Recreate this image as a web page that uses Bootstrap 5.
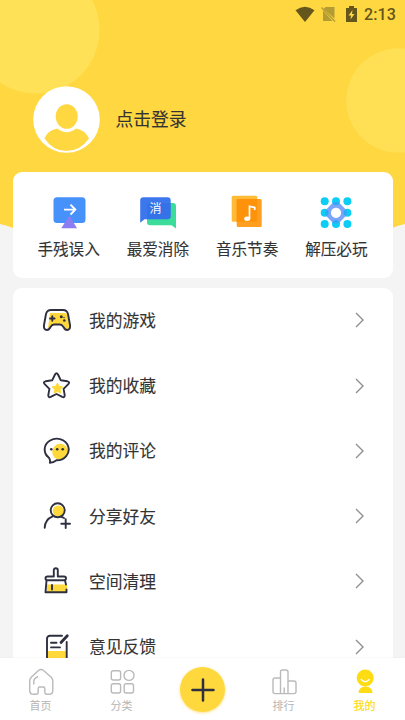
<!DOCTYPE html>
<html lang="zh-CN">
<head>
<meta charset="utf-8">
<meta name="viewport" content="width=device-width, initial-scale=1">
<title>我的</title>
<link href="https://cdn.jsdelivr.net/npm/bootstrap@5.3.0/dist/css/bootstrap.min.css" rel="stylesheet">
<style>
body{background:#f4f4f4;color:#333;font-family:"Noto Sans CJK SC",sans-serif;line-height:1}
.screen{height:720px;overflow:hidden}
.backdrop{top:0;left:0;z-index:0}
.statusbar{height:28px;padding:1px 9px 0 0;color:#65561c;font:500 16px/1 Roboto,sans-serif;letter-spacing:.1px}
.profile{height:144px;padding:13.5px 0 0 32.5px}
.login-text{font-size:17.8px;-webkit-text-stroke:.1px #333}
.profile-row{height:67px;margin-top:44px;gap:16px}
.panel{background:#fff;border-radius:9px;margin:0 12.5px}
.shortcuts{height:106px;padding:22px 11.5px 0}
.shortcut-name{font-size:15.6px;margin-top:11px;-webkit-text-stroke:.1px #333;white-space:nowrap}
.menu-list{height:400px;margin-top:9.6px;overflow:hidden}
.menu-line{height:65.3px;flex:none;padding:0 26.5px 0 30.5px;font-size:16.8px;-webkit-text-stroke:.1px #333}
.menu-line svg:first-child{margin-right:18px}
.tabs{height:62px;bottom:0;z-index:3;background:#fff;box-shadow:0 -1px 2px rgba(0,0,0,.025)}
.tab-item{color:#b5b5b5;font-size:11px;padding-top:10px;gap:4px}
.tab-item.on{color:#fddc14;-webkit-text-stroke:.2px #fddc14}
.add-btn{width:45px;height:45px;margin-top:9px;background:#ffd83d;box-shadow:0 1px 3px rgba(255,200,40,.55)}
.ink{fill:none;stroke:#2e3040;stroke-width:1.9;stroke-linecap:round;stroke-linejoin:round}
.soft{fill:none;stroke:#bababa;stroke-width:1.4;stroke-linecap:round;stroke-linejoin:round}
.sun{fill:#ffd93b}
</style>
</head>
<body>
<main class="screen position-relative">
<svg class="backdrop position-absolute" width="405" height="240" viewBox="0 0 405 240">
<path d="M0 0H405V224Q398 225.500 392 228V230H13V228Q7 225.500 0 224Z" fill="#ffd740"/>
<circle cx="36" cy="30" r="63.500" fill="#ffe158"/>
<circle cx="398.500" cy="100.500" r="52.300" fill="#ffe158" opacity=".85"/>
</svg>
<div class="position-relative">
<header class="statusbar d-flex justify-content-end align-items-center">
<svg width="69" height="20" viewBox="0 0 69 20">
<path d="M.500 5.300Q10 -1.700 19.500 5.300L10 17Z" fill="#65561c"/>
<path d="M30.500 2H39.500V13.500L28.500 4Z M28 5.500L37.500 16H28Z" fill="#b49c35"/><path d="M26.500 2.500L40 16.500" stroke="#b49c35" stroke-width="1.400"/>
<path d="M51 3H54V1H59V3H62V17H51Z" fill="#65561c"/><path d="M57.500 5L53.500 10.500H56L55.500 14.500L59.500 9H57Z" fill="#ffd740"/>
</svg>
<span>2:13</span>
</header>
<section class="profile">
<div class="d-flex align-items-center profile-row">
<svg width="67" height="67" viewBox="0 0 67 67"><circle cx="33.500" cy="33.500" r="33.300" fill="#fff"/><ellipse cx="33.700" cy="30.500" rx="11" ry="12.300" fill="#ffd740"/><path d="M11.500 52.500Q15 44 24.500 42.500Q33.700 50 43 42.500Q52 44 56 52.500Q47 65 33.500 65Q20 65 11.500 52.500Z" fill="#ffd740"/></svg>
<span class="login-text">点击登录</span>
</div>
</section>
<section class="panel shortcuts">
<div class="row g-0 row-cols-4 text-center">
<div class="col d-flex flex-column align-items-center">
<svg width="36" height="36" viewBox="0 0 36 36"><rect x="2.500" y="3.300" width="32" height="25.800" rx="3.500" fill="#4791fa"/><path d="M18.300 21.500L26 34.200H10.300Z" fill="#8d7df2"/><path d="M13 15.600H24M19.500 10.700L24.300 15.600L19.500 20.500" fill="none" stroke="#fff" stroke-width="1.900"/></svg>
<span class="shortcut-name">手残误入</span></div>
<div class="col d-flex flex-column align-items-center">
<svg width="36" height="36" viewBox="0 0 36 36"><path d="M10 9H33Q36 9 36 12V34.500L31.500 31.300H10Q7 31.300 7 28V12Q7 9 10 9Z" fill="#3cdc9b"/><path d="M3.500 3.300H27.500Q30.700 3.300 30.700 6.500V22Q30.700 25.300 27.500 25.300H4.500L.200 28.700V6.500Q.200 3.300 3.500 3.300Z" fill="#3c77ee"/><path d="M7 12Q7 9 10 9H30.700V22Q30.700 25.300 27.500 25.300H7Z" fill="#2967db" opacity=".35"/><text x="15.500" y="18.600" text-anchor="middle" font-size="12" fill="#fff">消</text></svg>
<span class="shortcut-name">最爱消除</span></div>
<div class="col d-flex flex-column align-items-center">
<svg width="36" height="36" viewBox="0 0 36 36"><rect x="2.700" y="1.800" width="25.500" height="26" rx="1.500" fill="#ffba36"/><rect x="7.700" y="5" width="25" height="28" rx="1.500" fill="#ff9f22"/><path d="M7.700 5H28.200V27.800H7.700Z" fill="#ff920b"/><ellipse cx="18.200" cy="24.800" rx="3" ry="2.200" fill="#fff"/><path d="M20.500 25V12.300L25.700 13.500V16" fill="none" stroke="#fff" stroke-width="1.700"/></svg>
<span class="shortcut-name">音乐节奏</span></div>
<div class="col d-flex flex-column align-items-center">
<svg width="36" height="36" viewBox="0 0 36 36"><g fill="#0dcdf5"><circle cx="6.700" cy="7.200" r="4"/><circle cx="18" cy="7.200" r="4"/><circle cx="29.400" cy="7.200" r="4"/><circle cx="6.700" cy="18.800" r="4"/><circle cx="18" cy="18.800" r="4"/><circle cx="29.400" cy="18.800" r="4"/><circle cx="6.700" cy="30" r="4"/><circle cx="18" cy="30" r="4"/><circle cx="29.400" cy="30" r="4"/></g><path d="M14.500 9Q18 7 21.500 9L27.800 15.500Q29.800 18.800 27.800 22.100L21.500 28.500Q18 30.500 14.500 28.500L8.200 22.100Q6.200 18.800 8.200 15.500Z" fill="#7aa5fb"/><g fill="#24acf5"><path d="M14.500 9Q18 7 21.500 9Q20.600 11.200 18 11.200Q15.400 11.200 14.500 9ZM14.500 28.500Q18 30.500 21.500 28.500Q20.600 26 18 26Q15.400 26 14.500 28.500ZM8.200 15.500Q6.200 18.800 8.200 22.100Q10.700 21 10.700 18.800Q10.700 16.600 8.200 15.500ZM27.800 15.500Q29.800 18.800 27.800 22.100Q25.400 21 25.400 18.800Q25.400 16.600 27.800 15.500Z"/></g><circle cx="18" cy="18.800" r="5.100" fill="#fff"/></svg>
<span class="shortcut-name">解压必玩</span></div>
</div>
</section>
<section class="panel menu-list d-flex flex-column">
<div class="menu-line d-flex align-items-center">
<svg width="28" height="28" viewBox="0 0 28 28"><path class="sun" d="M7 7H22Q24 7 25 11L27 22L24 24L19 18H10L5 22Z"/><path class="ink" d="M8 4H20Q24 4 25 8L27 19Q27.500 24 24 24Q22 24 20.500 21Q19 18.500 17 18.500H11Q9 18.500 7.500 21Q6 24 4 24Q.500 24 1 19L3 8Q4 4 8 4Z"/><path class="ink" d="M7 12.500H11.600M9.300 10.200V14.800"/><g fill="#2e3040"><circle cx="18.300" cy="10.800" r="1.500"/><circle cx="21.300" cy="14.500" r="1.300"/><circle cx="21" cy="11.500" r=".7"/></g></svg>
<span>我的游戏</span><svg class="ms-auto" width="12" height="18" viewBox="0 0 12 18"><path d="M2 2L9 9L2 16" fill="none" stroke="#8f8f8f" stroke-width="1.400"/></svg></div>
<div class="menu-line d-flex align-items-center">
<svg width="28" height="28" viewBox="0 0 28 28"><path class="ink" d="M12 2.500Q13.500 0 15 2.500L17.800 8.300L24.500 9.300Q27.200 10 25.300 12.100L20.600 16.800L21.700 23.200Q21.700 26 19.300 24.900L13.500 22L7.700 24.900Q5.300 26 5.300 23.200L6.400 16.800L1.700 12.100Q-.200 10 2.500 9.300L9.200 8.300Z"/><path class="sun" stroke="#ffd93b" stroke-linejoin="round" d="M14.400 11L16 14.300L19.700 14.900L17 17.500L17.700 21.100L14.400 19.400L11.100 21.100L11.800 17.500L9.100 14.900L12.800 14.300Z"/></svg>
<span>我的收藏</span><svg class="ms-auto" width="12" height="18" viewBox="0 0 12 18"><path d="M2 2L9 9L2 16" fill="none" stroke="#8f8f8f" stroke-width="1.400"/></svg></div>
<div class="menu-line d-flex align-items-center">
<svg width="28" height="28" viewBox="0 0 28 28"><circle class="sun" cx="17.200" cy="14.800" r="8"/><path class="ink" d="M6 20.800A12 10.800 0 1 1 13.500 23.300Q10.500 25.600 6.800 25.800Q7.600 23.500 6 20.800Z"/><g fill="#2e3040"><circle cx="8.300" cy="12.200" r="1.300"/><circle cx="14.200" cy="12.200" r="1.300"/><circle cx="19.700" cy="12.200" r="1.300"/></g></svg>
<span>我的评论</span><svg class="ms-auto" width="12" height="18" viewBox="0 0 12 18"><path d="M2 2L9 9L2 16" fill="none" stroke="#8f8f8f" stroke-width="1.400"/></svg></div>
<div class="menu-line d-flex align-items-center">
<svg width="28" height="28" viewBox="0 0 28 28"><circle class="sun" cx="15.300" cy="9" r="5.600"/><circle class="ink" cx="14.700" cy="8.300" r="7"/><path class="ink" d="M1.700 25.700Q2 17.500 9.700 14.400M18.500 14.800L21 16"/><path class="ink" d="M18.300 21.700H27M22.700 17.300V26.100"/></svg>
<span>分享好友</span><svg class="ms-auto" width="12" height="18" viewBox="0 0 12 18"><path d="M2 2L9 9L2 16" fill="none" stroke="#8f8f8f" stroke-width="1.400"/></svg></div>
<div class="menu-line d-flex align-items-center">
<svg width="28" height="28" viewBox="0 0 28 28"><path class="sun" d="M4 17.500H24V25H4Z"/><path class="ink" d="M10.800 9.500V3Q10.800 1.200 12.800 1.200Q14.800 1.200 14.800 3V9.500H21Q23 9.500 23 11.300Q23 13.300 21 13.300H4.500Q2.500 13.300 2.500 11.300Q2.500 9.500 4.500 9.500ZM3.500 13.500L2.500 25.300H23.500V22.500M22 13.500L23 17.500M9 18V22.500"/></svg>
<span>空间清理</span><svg class="ms-auto" width="12" height="18" viewBox="0 0 12 18"><path d="M2 2L9 9L2 16" fill="none" stroke="#8f8f8f" stroke-width="1.400"/></svg></div>
<div class="menu-line d-flex align-items-center">
<svg width="28" height="28" viewBox="0 0 28 28"><path class="sun" d="M4 18H23.500V26.500H4Z"/><path class="ink" d="M19 2.800H7Q4 2.800 4 5.800V26.800H23.700V9M8 9.700H13.500M8 14.400H17"/><path d="M24.300 2.700L18 9.500" fill="none" stroke="#2e3040" stroke-width="2.800" stroke-linecap="round"/></svg>
<span>意见反馈</span><svg class="ms-auto" width="12" height="18" viewBox="0 0 12 18"><path d="M2 2L9 9L2 16" fill="none" stroke="#8f8f8f" stroke-width="1.400"/></svg></div>
</section>
</div>
<nav class="tabs position-absolute start-0 w-100">
<div class="row g-0 row-cols-5">
<div class="col tab-item d-flex flex-column align-items-center">
<svg width="28" height="28" viewBox="0 0 28 28"><path class="soft" d="M11.500 2.500Q14 .500 16.500 2.500L24 9Q25.800 11 25.800 13V22.500Q25.800 26.300 22 26.300H20Q17.800 26.300 17.800 24V20.500Q17.800 19 16.500 19H12.500Q11.200 19 11.200 20.500V24Q11.200 26.300 9 26.300H6.500Q2.700 26.300 2.700 22.500V13Q2.700 11 4.500 9ZM6.800 16V13Q7 10.500 10.800 8.700"/></svg><span>首页</span></div>
<div class="col tab-item d-flex flex-column align-items-center">
<svg width="28" height="28" viewBox="0 0 28 28"><g class="soft"><rect x="3.300" y="2.700" width="9.300" height="9.300" rx="2"/><circle cx="21" cy="7.400" r="5"/><rect x="3.300" y="15.700" width="9.300" height="9.300" rx="2"/><rect x="16.200" y="15.700" width="9.300" height="9.300" rx="2"/></g></svg><span>分类</span></div>
<div class="col d-flex justify-content-center">
<div class="add-btn rounded-circle d-flex align-items-center justify-content-center"><svg width="24" height="24" viewBox="0 0 24 24"><path d="M1.500 12H22.500M12 1.500V22.500" stroke="#2e3040" stroke-width="2.500" stroke-linecap="round"/></svg></div></div>
<div class="col tab-item d-flex flex-column align-items-center">
<svg width="28" height="28" viewBox="0 0 28 28"><path class="soft" d="M10.500 25.600H5Q3 25.600 3 23.600V12Q3 10 5 10H10.500M10.500 25.600V4Q10.500 2 12.500 2H16Q18 2 18 4V25.600ZM18 25.600H24Q26 25.600 26 23.600V15Q26 13 24 13H18M14.200 20V25.500"/></svg><span>排行</span></div>
<div class="col tab-item on d-flex flex-column align-items-center">
<svg width="28" height="28" viewBox="0 0 28 28"><circle cx="14.200" cy="10" r="8.500" fill="#fddc14"/><path d="M7.500 25Q7.500 19 14.500 18.500Q21.500 19 21.500 25Z" fill="#fddc14"/><path d="M10.200 11.500Q14.200 16 18.200 11.500" fill="none" stroke="#fff" stroke-width="1.300" stroke-linecap="round"/></svg><span>我的</span></div>
</div>
</nav>
</main>
<script src="https://cdn.jsdelivr.net/npm/bootstrap@5.3.0/dist/js/bootstrap.bundle.min.js"></script>
</body>
</html>
